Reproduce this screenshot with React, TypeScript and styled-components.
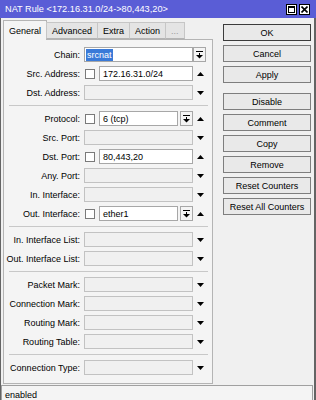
import React from "react";
import styled, { createGlobalStyle } from "styled-components";

const GlobalStyle = createGlobalStyle`
  html, body {
    margin: 0;
    padding: 0;
    background: #f0f0f0;
  }
  body {
    font-family: "Liberation Sans", Arial, sans-serif;
    font-size: 9px;
    color: #000;
  }
`;

const Window = styled.div`
  width: 316px;
  height: 400px;
  display: flex;
  flex-direction: column;
  background: #f0f0f0;
  overflow: hidden;
`;

const TitleBar = styled.div`
  height: 18px;
  flex: 0 0 18px;
  display: flex;
  align-items: center;
  justify-content: space-between;
  padding: 0 6px 0 5px;
  background: #5a5dd6;
  color: #fff;
  font-size: 9.2px;
`;

const TitleButtons = styled.div`
  display: flex;
  gap: 2px;
`;

const TitleButton = styled.div`
  width: 11px;
  height: 11px;
  box-sizing: border-box;
  border: 1px solid #000;
  background: #fff;
  display: flex;
  align-items: center;
  justify-content: center;
`;

const Frame = styled.div`
  flex: 1;
  display: flex;
  flex-direction: column;
  border-left: 1px solid #646464;
  border-right: 2px solid #646464;
  border-bottom: 1px solid #646464;
`;

const Main = styled.div`
  flex: 1;
  display: flex;
  padding: 2px 0 0 2px;
`;

const LeftColumn = styled.div`
  width: 210px;
  display: flex;
  flex-direction: column;
`;

const TabRow = styled.div`
  height: 19px;
  display: flex;
  align-items: flex-end;
  position: relative;
  z-index: 1;
`;

const Tab = styled.div<{ $active?: boolean; $muted?: boolean }>`
  box-sizing: border-box;
  height: ${(p) => (p.$active ? "20px" : "17px")};
  margin-bottom: ${(p) => (p.$active ? "-1px" : "0")};
  padding: 0 5px;
  display: flex;
  align-items: center;
  border: 1px solid ${(p) => (p.$active ? "#b4b4b4" : "#c6c6c6")};
  border-bottom: ${(p) => (p.$active ? "none" : "1px solid #b4b4b4")};
  margin-right: -1px;
  background: ${(p) => (p.$active ? "#f4f4f4" : "#e4e4e4")};
  color: ${(p) => (p.$muted ? "#9a9a9a" : "#000")};
  white-space: nowrap;
`;

const Panel = styled.div`
  flex: 1;
  box-sizing: border-box;
  border: 1px solid #b4b4b4;
  background: #f4f4f4;
  padding: 7px 0 4px 0;
  display: flex;
  flex-direction: column;
`;

const Row = styled.div`
  height: 15px;
  margin-bottom: 4px;
  display: flex;
  align-items: center;
`;

const Label = styled.div`
  flex: 0 0 80px;
  box-sizing: border-box;
  padding-right: 4px;
  text-align: right;
  white-space: nowrap;
`;

const Separator = styled.div`
  height: 1px;
  margin: 1px 4px 5px 5px;
  background: #c8c8c8;
`;

const Check = styled.div`
  width: 10px;
  height: 10px;
  box-sizing: border-box;
  margin: 0 4px 0 1px;
  border: 1px solid #7a7a7a;
  background: #fff;
`;

const TextBox = styled.div<{ $w: number; $disabled?: boolean }>`
  width: ${(p) => p.$w}px;
  height: 15px;
  box-sizing: border-box;
  border: 1px solid ${(p) => (p.$disabled ? "#c2c2c2" : "#a7a7a7")};
  background: ${(p) => (p.$disabled ? "#f0f0f0" : "#fff")};
  padding-left: ${(p) => (p.$disabled ? 0 : 3)}px;
  display: flex;
  align-items: center;
  white-space: nowrap;
  overflow: hidden;
`;

const Selection = styled.span`
  margin-left: -2px;
  padding: 0 1px;
  line-height: 12px;
  background: #3a7ad8;
  color: #fff;
`;

const DropButton = styled.div<{ $gap: number }>`
  width: 13px;
  height: 15px;
  box-sizing: border-box;
  margin-left: ${(p) => p.$gap}px;
  border: 1px solid #a7a7a7;
  background: #f4f4f4;
  display: flex;
  align-items: center;
  justify-content: center;
`;

const ArrowSlot = styled.div`
  width: 14px;
  display: flex;
  align-items: center;
  justify-content: center;
`;

const RightColumn = styled.div`
  width: 88px;
  margin-left: 10px;
  padding-top: 4px;
  display: flex;
  flex-direction: column;
  gap: 10px;
`;

const ButtonGroup = styled.div`
  display: flex;
  flex-direction: column;
  gap: 4px;
`;

const Button = styled.div<{ $default?: boolean }>`
  height: 17px;
  box-sizing: border-box;
  border: 1px solid ${(p) => (p.$default ? "#3c3c3c" : "#7e7e7e")};
  background: #e9e9e9;
  display: flex;
  align-items: center;
  justify-content: center;
  white-space: nowrap;
`;

const StatusBar = styled.div`
  height: 18px;
  margin: 1px 1px 0 0;
  box-sizing: border-box;
  border: 1px solid #a0a0a0;
  border-bottom: none;
  padding-left: 3px;
  display: flex;
  align-items: center;
  background: #f4f4f4;
`;

const DropIcon = () => (
  <svg width="7" height="8" viewBox="0 0 7 8">
    <rect x="0" y="0" width="7" height="1" fill="#000" />
    <rect x="3" y="2" width="1" height="2" fill="#000" />
    <polygon points="0,4 7,4 3.5,7.5" fill="#000" />
  </svg>
);

const Arrow = ({ dir }: { dir: "up" | "down" }) => (
  <svg width="7" height="4" viewBox="0 0 7 4">
    {dir === "up" ? (
      <polygon points="0,4 7,4 3.5,0" fill="#000" />
    ) : (
      <polygon points="0,0 7,0 3.5,4" fill="#000" />
    )}
  </svg>
);

type FieldProps = {
  label: string;
  value?: string;
  check?: boolean;
  drop?: boolean;
  selected?: boolean;
};

const Field = ({ label, value, check, drop, selected }: FieldProps) => {
  const disabled = value === undefined;
  let width = 109;
  if (check) width = drop ? 79 : 94;
  const chainStyle = selected && drop;

  return (
    <Row>
      <Label>{label}</Label>
      {check && <Check />}
      <TextBox $w={width} $disabled={disabled}>
        {selected ? <Selection>{value}</Selection> : value}
      </TextBox>
      {drop && (
        <DropButton $gap={chainStyle ? 0 : 2}>
          <DropIcon />
        </DropButton>
      )}
      {!chainStyle && (
        <ArrowSlot>
          <Arrow dir={disabled ? "down" : "up"} />
        </ArrowSlot>
      )}
    </Row>
  );
};

const App = () => (
  <Window>
    <GlobalStyle />
    <TitleBar>
      <span>NAT Rule &lt;172.16.31.0/24-&gt;80,443,20&gt;</span>
      <TitleButtons>
        <TitleButton>
          <svg width="7" height="7" viewBox="0 0 7 7">
            <rect x="0.5" y="0.5" width="6" height="6" fill="none" stroke="#000" />
            <rect x="0" y="0" width="7" height="2" fill="#000" />
          </svg>
        </TitleButton>
        <TitleButton>
          <svg width="7" height="7" viewBox="0 0 7 7">
            <path d="M0.5 0.5 L6.5 6.5 M6.5 0.5 L0.5 6.5" stroke="#000" strokeWidth="1.6" />
          </svg>
        </TitleButton>
      </TitleButtons>
    </TitleBar>
    <Frame>
      <Main>
        <LeftColumn>
          <TabRow>
            <Tab $active>General</Tab>
            <Tab>Advanced</Tab>
            <Tab>Extra</Tab>
            <Tab>Action</Tab>
            <Tab $muted>...</Tab>
          </TabRow>
          <Panel>
            <Field label="Chain:" value="srcnat" selected drop />
            <Field label="Src. Address:" value="172.16.31.0/24" check />
            <Field label="Dst. Address:" />
            <Separator />
            <Field label="Protocol:" value="6 (tcp)" check drop />
            <Field label="Src. Port:" />
            <Field label="Dst. Port:" value="80,443,20" check />
            <Field label="Any. Port:" />
            <Field label="In. Interface:" />
            <Field label="Out. Interface:" value="ether1" check drop />
            <Separator />
            <Field label="In. Interface List:" />
            <Field label="Out. Interface List:" />
            <Separator />
            <Field label="Packet Mark:" />
            <Field label="Connection Mark:" />
            <Field label="Routing Mark:" />
            <Field label="Routing Table:" />
            <Separator />
            <Field label="Connection Type:" />
          </Panel>
        </LeftColumn>
        <RightColumn>
          <ButtonGroup>
            <Button $default>OK</Button>
            <Button>Cancel</Button>
            <Button>Apply</Button>
          </ButtonGroup>
          <ButtonGroup>
            <Button>Disable</Button>
            <Button>Comment</Button>
            <Button>Copy</Button>
            <Button>Remove</Button>
            <Button>Reset Counters</Button>
            <Button>Reset All Counters</Button>
          </ButtonGroup>
        </RightColumn>
      </Main>
      <StatusBar>enabled</StatusBar>
    </Frame>
  </Window>
);

export default App;
